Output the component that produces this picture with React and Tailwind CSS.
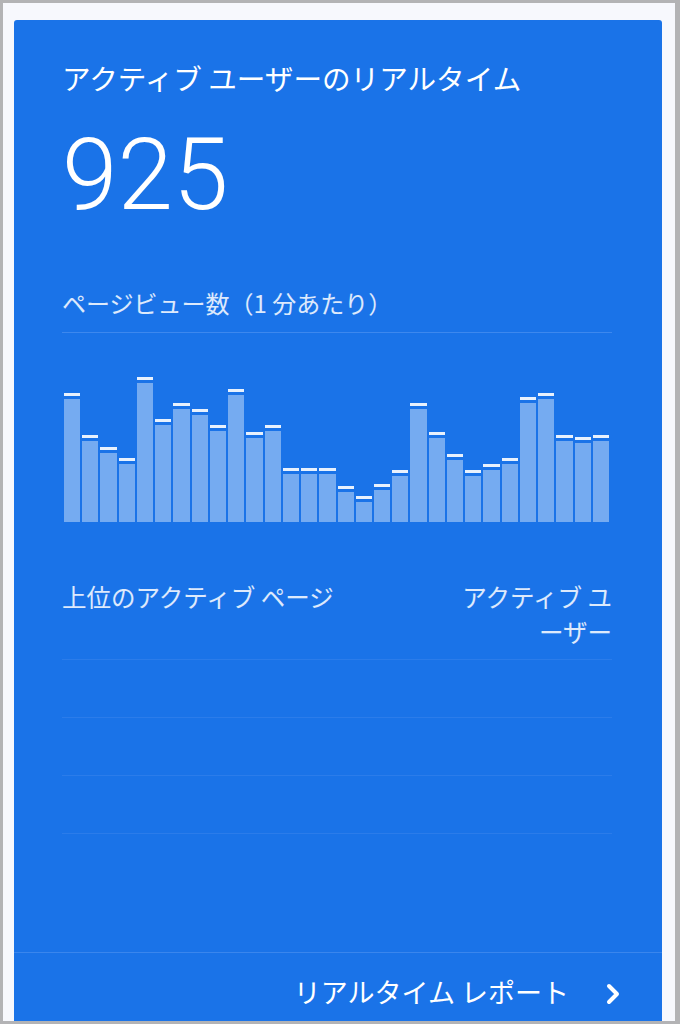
import React from "react";

const bars = [
  129, 87, 75, 64, 145, 103, 119, 113, 97, 133, 90, 97, 54, 54, 54, 36, 26, 38,
  52, 119, 90, 68, 52, 58, 64, 125, 129, 87, 85, 87,
];

const jp = { fontFamily: '"Noto Sans CJK JP", "Noto Sans", sans-serif' };

function Bar({ value }) {
  return (
    <div className="flex flex-1 flex-col" style={{ height: value }}>
      <div className="h-[3px] bg-white/90" />
      <div className="mt-[3px] flex-1 bg-white/40" />
    </div>
  );
}

export default function App() {
  return (
    <div className="h-[1024px] w-[680px] overflow-hidden border-t-[3px] border-l-[3px] border-r-[5px] border-b-[3px] border-[#b3b3b5] bg-[#f7f8fd] pt-[17px] pl-[11px] pr-[13px]">
      <div
        className="flex h-[1001px] flex-col rounded-t-[3px] bg-[#1a73e8] text-white"
        style={jp}
      >
        <div className="flex-1 pt-[41px] pl-[48px] pr-[50px]">
          <div className="text-[28.6px] leading-[34px]">
            アクティブ ユーザーのリアルタイム
          </div>
          <div
            className="mt-[30px] text-[100px] font-light leading-[100px]"
            style={{ fontFamily: "Roboto, sans-serif" }}
          >
            925
          </div>
          <div className="mt-[63px] border-b border-[#3d88ee] pb-[14px] text-[24px] leading-[30px] text-white/85">
            ページビュー数（1 分あたり）
          </div>
          <div className="ml-[2px] mr-[3px] flex h-[189px] items-end gap-[2px]">
            {bars.map((v, i) => (
              <Bar key={i} value={v} />
            ))}
          </div>

          <div className="mt-[57px] flex items-start justify-between border-b border-[#2b7cea] pb-[10px] text-[24.5px] leading-[35px] text-white/85">
            <div>上位のアクティブ ページ</div>
            <div className="w-[160px] text-right [line-break:loose]">
              アクティブ ユーザー
            </div>
          </div>
          <div className="h-[58px] border-b border-[#2b7cea]" />
          <div className="h-[58px] border-b border-[#2b7cea]" />
          <div className="h-[58px] border-b border-[#2b7cea]" />
        </div>

        <div className="flex h-[69px] items-start justify-end border-t border-[#3a86ed] pt-[24px] pr-[41px]">
          <span className="text-[27px] leading-[30px]">リアルタイム レポート</span>
          <svg
            className="ml-[36px] mt-[6px]"
            width="16"
            height="22"
            viewBox="0 0 16 22"
            fill="none"
          >
            <polyline
              points="4,3 12,11 4,19"
              stroke="white"
              strokeWidth="4"
              strokeLinecap="round"
              strokeLinejoin="round"
            />
          </svg>
        </div>
      </div>
    </div>
  );
}
